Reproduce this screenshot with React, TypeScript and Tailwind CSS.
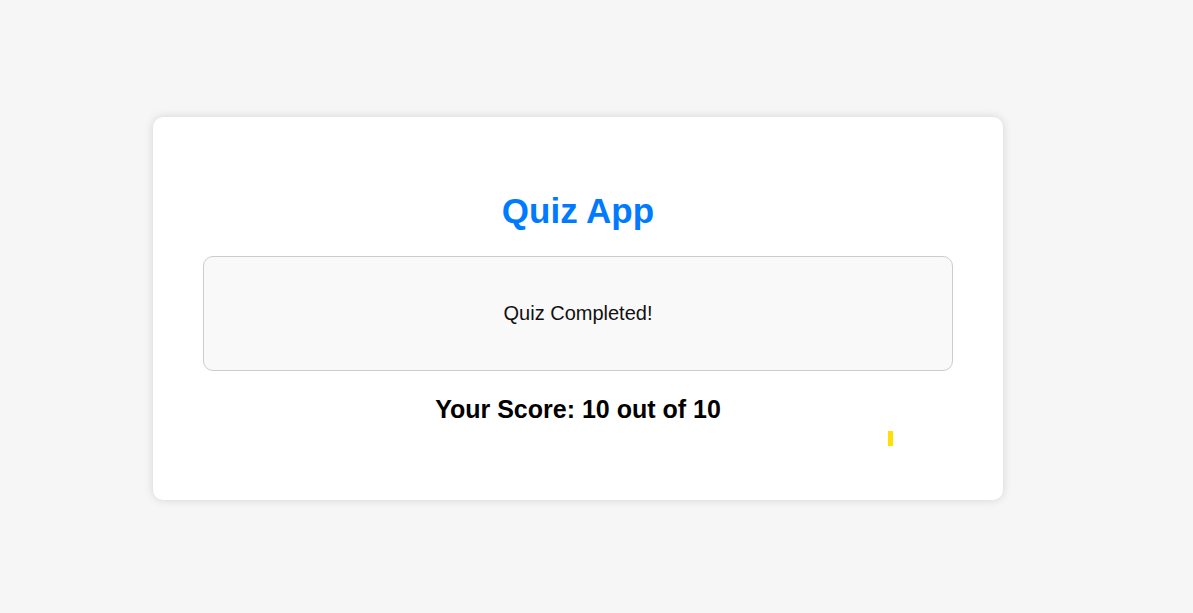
export default function App() {
  return (
    <div className="min-h-[613px] bg-[#f6f6f6] pt-[117px] font-['Liberation_Sans',Arial,sans-serif]">
      <div className="relative ml-[153px] w-[850px] rounded-[10px] bg-white px-[50px] pt-[74px] pb-[76px] shadow-[0_0_10px_rgba(0,0,0,0.14)]">
        <h1 className="text-center text-[35px] font-bold leading-[40px] text-[#007bff]">
          Quiz App
        </h1>
        <div className="mt-[25px] flex h-[115px] items-center justify-center rounded-[10px] border border-[#cccccc] bg-[#f9f9f9]">
          <p className="text-[20px] leading-[23px] text-[#111]">Quiz Completed!</p>
        </div>
        <h2 className="mt-[24px] text-center text-[25px] font-bold leading-[29px] text-black">
          Your Score: 10 out of 10
        </h2>
        <div className="absolute left-[735px] top-[314px] h-[15px] w-[5px] bg-[#ffe000]" />
      </div>
    </div>
  );
}
